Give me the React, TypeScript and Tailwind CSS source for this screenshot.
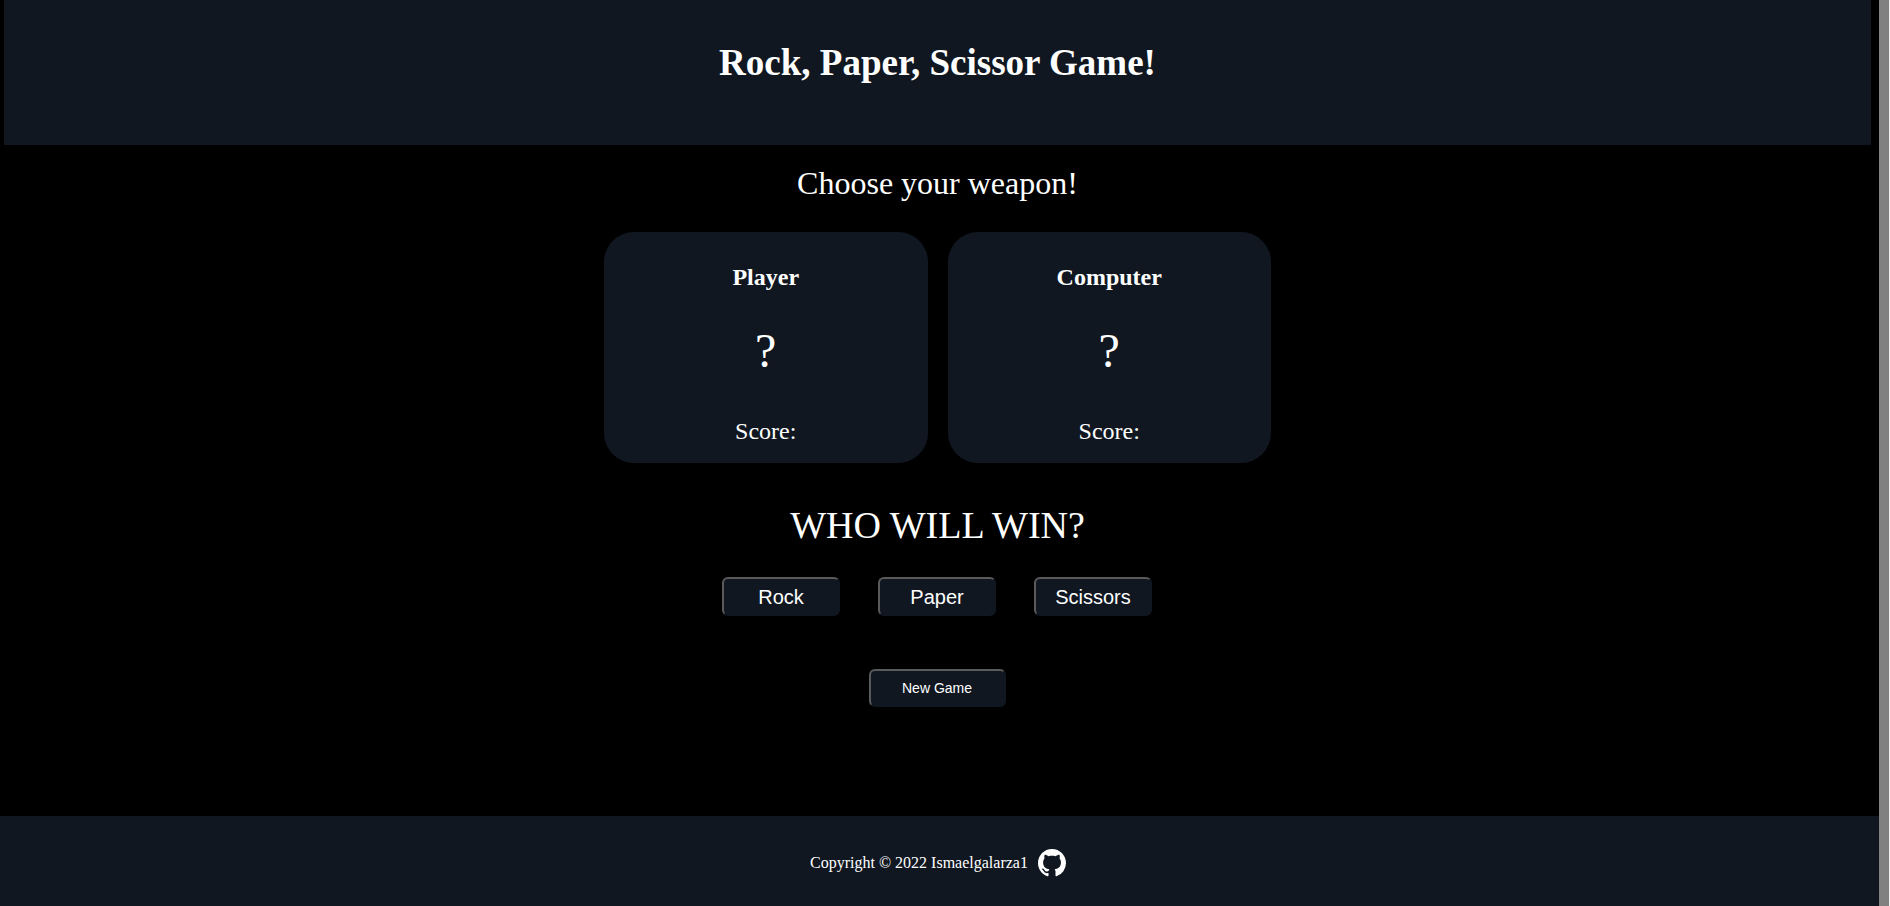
const GITHUB = "M8 0C3.58 0 0 3.58 0 8c0 3.54 2.29 6.53 5.47 7.59.4.07.55-.17.55-.38 0-.19-.01-.82-.01-1.49-2.01.37-2.53-.49-2.69-.94-.09-.23-.48-.94-.82-1.13-.28-.15-.68-.52-.01-.53.63-.01 1.08.58 1.23.82.72 1.21 1.87.87 2.33.66.07-.52.28-.87.51-1.07-1.78-.2-3.64-.89-3.64-3.95 0-.87.31-1.59.82-2.15-.08-.2-.36-1.02.08-2.12 0 0 .67-.21 2.2.82.64-.18 1.32-.27 2-.27.68 0 1.36.09 2 .27 1.53-1.04 2.2-.82 2.2-.82.44 1.1.16 1.92.08 2.12.51.56.82 1.27.82 2.15 0 3.07-1.87 3.75-3.65 3.95.29.25.54.73.54 1.48 0 1.07-.01 1.93-.01 2.2 0 .21.15.46.55.38A8.013 8.013 0 0016 8c0-4.42-3.58-8-8-8z";

function Card({ name }: { name: string }) {
  return (
    <div className="w-[323.5px] h-[231px] rounded-[30px] bg-[#101721] flex flex-col items-center">
      <h3 className="mt-[31px] text-[24px] leading-[28px] font-bold">{name}</h3>
      <div className="mt-[32px] text-[48px] leading-[55px]">?</div>
      <div className="mt-[39px] text-[24px] leading-[28px]">Score:</div>
    </div>
  );
}

function Btn({ label }: { label: string }) {
  return (
    <button className="w-[118px] h-[39px] rounded-[6px] bg-[#101721] border-2 border-t-[#5a5a5a] border-l-[#5a5a5a] border-r-[#101721] border-b-[#101721] text-[20px] font-['Liberation_Sans',sans-serif] text-white">
      {label}
    </button>
  );
}

export default function App() {
  return (
    <div className="w-[1890px] h-[906px] overflow-hidden flex bg-black text-white font-['Liberation_Serif',serif]">
      <div className="w-[1879px] h-full flex flex-col">
        <header className="ml-[4px] mr-[8px] h-[145px] shrink-0 bg-[#101721] flex justify-center pt-[41px]">
          <h1 className="text-[37px] leading-[43px] font-bold">Rock, Paper, Scissor Game!</h1>
        </header>
        <main className="flex-1 ml-[4px] mr-[8px] flex flex-col items-center">
          <h2 className="mt-[20px] text-[32px] leading-[37px]">Choose your weapon!</h2>
          <div className="mt-[30px] flex gap-[20px]">
            <Card name="Player" />
            <Card name="Computer" />
          </div>
          <h2 className="mt-[40px] text-[38px] leading-[44px]">WHO WILL WIN?</h2>
          <div className="mt-[30px] mr-[1px] flex gap-[38px]">
            <Btn label="Rock" />
            <Btn label="Paper" />
            <Btn label="Scissors" />
          </div>
          <button className="mt-[53px] mr-[1px] w-[137px] h-[38px] rounded-[6px] bg-[#101721] border-2 border-t-[#5a5a5a] border-l-[#5a5a5a] border-r-[#101721] border-b-[#101721] text-[14px] font-['Liberation_Sans',sans-serif] text-white">
            New Game
          </button>
        </main>
        <footer className="h-[90px] shrink-0 bg-[#101721] flex items-center justify-center pt-[4px]">
          <div className="flex items-center gap-[10px] ml-[-3px]">
            <span className="text-[16px]">Copyright © 2022 Ismaelgalarza1</span>
            <svg viewBox="0 0 16 16" className="w-[28px] h-[28px]" fill="#ffffff"><path d={GITHUB} /></svg>
          </div>
        </footer>
      </div>
      <div className="w-[10px] h-full bg-[#808080]" />
      <div className="w-[1px] h-full bg-[#f0f0f0]" />
    </div>
  );
}
